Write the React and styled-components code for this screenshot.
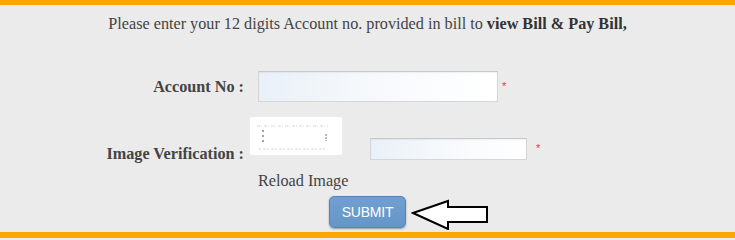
import React from "react";
import styled, { createGlobalStyle } from "styled-components";

const Global = createGlobalStyle`
  html, body { margin: 0; padding: 0; background: #ebebeb; }
  body { font-family: "Liberation Serif", "Times New Roman", serif; }
`;

const Page = styled.div`
  width: 735px;
  height: 238px;
  box-sizing: border-box;
  background: #ebebeb;
  border-top: 5px solid #ffa500;
  border-bottom: 6px solid #ffa500;
  display: flex;
  flex-direction: column;
  color: #444;
`;

const Intro = styled.p`
  margin: 10px 0 0;
  font-size: 16.2px;
  line-height: 18px;
  text-align: center;
  color: #444;
  b { color: #333; }
`;

const Row = styled.div`
  display: flex;
  align-items: ${(p) => p.$align || "center"};
  margin-top: ${(p) => p.$top}px;
`;

const Label = styled.label`
  width: 244px;
  flex: none;
  text-align: right;
  font-weight: bold;
  font-size: 16.2px;
  line-height: 18px;
  color: #444;
  padding-top: ${(p) => p.$pt || 0}px;
`;

const Field = styled.div`
  display: flex;
  align-items: flex-start;
  margin-left: ${(p) => p.$ml}px;
`;

const Input = styled.input`
  box-sizing: border-box;
  width: ${(p) => p.$w}px;
  height: ${(p) => p.$h}px;
  margin: ${(p) => p.$mt || 0}px 0 0 ${(p) => p.$ml || 0}px;
  padding: 0 4px;
  border: 1px solid #d6d6d6;
  border-top-color: #c8c8c8;
  background: linear-gradient(to right, #e9f0f7 0%, #f6f9fc 45%, #ffffff 100%);
  box-shadow: inset 0 1px 2px rgba(0, 0, 0, 0.06);
  outline: none;
`;

const Star = styled.span`
  color: #e23b3b;
  font-size: 11px;
  font-family: "Liberation Sans", Arial, sans-serif;
  margin: ${(p) => p.$mt || 0}px 0 0 ${(p) => p.$ml}px;
  line-height: 12px;
`;

const Captcha = styled.div`
  width: 92px;
  height: 38px;
  background: #fff;
  flex: none;
  display: flex;
`;

const Reload = styled.div`
  margin: 9px 0 0 258px;
  font-size: 16.2px;
  line-height: 18px;
  color: #444;
`;

const SubmitWrap = styled.div`
  position: relative;
  align-self: center;
  margin-top: 6px;
`;

const Submit = styled.button`
  width: 77px;
  height: 32px;
  border: 1px solid #5584b5;
  border-radius: 5px;
  background: linear-gradient(#6fa0d0, #6596c8);
  color: #fff;
  font-family: "Liberation Sans", Arial, sans-serif;
  font-size: 14px;
  letter-spacing: -0.2px;
  box-shadow: 0 1px 2px rgba(0, 0, 0, 0.35);
  padding: 0;
  cursor: pointer;
`;

const Arrow = styled.svg`
  position: absolute;
  left: 82px;
  top: 2px;
`;

function CaptchaImage() {
  return (
    <Captcha>
      <svg width="92" height="38" viewBox="0 0 92 38">
        <line x1="7" y1="9" x2="78" y2="9" stroke="#d8d8d8" strokeWidth="1" strokeDasharray="3 1 1 2" />
        <line x1="9" y1="32" x2="76" y2="32" stroke="#d8d8d8" strokeWidth="1" strokeDasharray="2 2 3 1" />
        <line x1="13" y1="13" x2="13" y2="27" stroke="#444" strokeWidth="1" strokeDasharray="2 3" />
        <line x1="76" y1="17" x2="76" y2="24" stroke="#777" strokeWidth="1" strokeDasharray="2 1" />
      </svg>
    </Captcha>
  );
}

export default function App() {
  return (
    <>
      <Global />
      <Page>
        <Intro>
          Please enter your 12 digits Account no. provided in bill to <b>view Bill &amp; Pay Bill,</b>
        </Intro>
        <Row $top={38}>
          <Label $pt={1}>Account No :</Label>
          <Field $ml={14}>
            <Input $w={240} $h={31} />
            <Star $ml={4} $mt={9}>*</Star>
          </Field>
        </Row>
        <Row $top={15} $align="flex-start">
          <Label $pt={28}>Image Verification :</Label>
          <Field $ml={6}>
            <CaptchaImage />
            <Input $w={157} $h={22} $ml={28} $mt={21} />
            <Star $ml={9} $mt={25}>*</Star>
          </Field>
        </Row>
        <Reload>Reload Image</Reload>
        <SubmitWrap>
          <Submit>SUBMIT</Submit>
          <Arrow width="80" height="32" viewBox="0 0 80 32">
            <polygon
              points="2,15 37,3 37,9 76,9 76,24 37,24 37,31"
              fill="#fff"
              stroke="#000"
              strokeWidth="2"
              strokeLinejoin="miter"
            />
          </Arrow>
        </SubmitWrap>
      </Page>
    </>
  );
}
